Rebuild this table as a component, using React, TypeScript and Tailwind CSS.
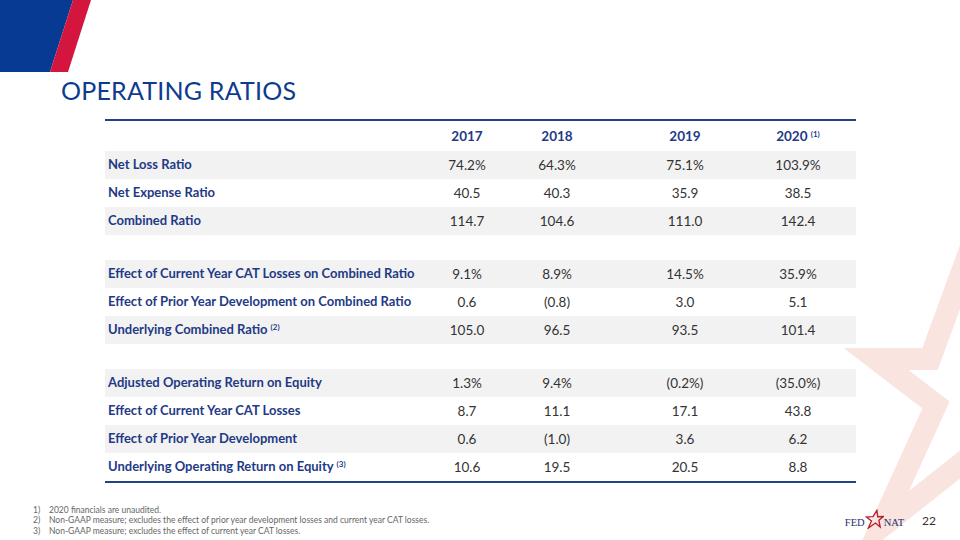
import React from 'react'

type Row = { label: string; sup?: string; values: string[]; shaded: boolean }

const groups: Row[][] = [
  [
    { label: 'Net Loss Ratio', values: ['74.2%', '64.3%', '75.1%', '103.9%'], shaded: true },
    { label: 'Net Expense Ratio', values: ['40.5', '40.3', '35.9', '38.5'], shaded: false },
    { label: 'Combined Ratio', values: ['114.7', '104.6', '111.0', '142.4'], shaded: true },
  ],
  [
    { label: 'Effect of Current Year CAT Losses on Combined Ratio', values: ['9.1%', '8.9%', '14.5%', '35.9%'], shaded: true },
    { label: 'Effect of Prior Year Development on Combined Ratio', values: ['0.6', '(0.8)', '3.0', '5.1'], shaded: false },
    { label: 'Underlying Combined Ratio', sup: '(2)', values: ['105.0', '96.5', '93.5', '101.4'], shaded: true },
  ],
  [
    { label: 'Adjusted Operating Return on Equity', values: ['1.3%', '9.4%', '(0.2%)', '(35.0%)'], shaded: true },
    { label: 'Effect of Current Year CAT Losses', values: ['8.7', '11.1', '17.1', '43.8'], shaded: false },
    { label: 'Effect of Prior Year Development', values: ['0.6', '(1.0)', '3.6', '6.2'], shaded: true },
    { label: 'Underlying Operating Return on Equity', sup: '(3)', values: ['10.6', '19.5', '20.5', '8.8'], shaded: false },
  ],
]

const footnotes = [
  '2020 financials are unaudited.',
  'Non-GAAP measure; excludes the effect of prior year development losses and current year CAT losses.',
  'Non-GAAP measure; excludes the effect of current year CAT losses.',
]

const cols = 'grid grid-cols-[317px_90px_90px_166px_60px_1fr] items-center'

// big faded star behind the table, mostly off the right edge
function StarWatermark() {
  return (
    <svg className="absolute inset-0" width={960} height={540} viewBox="0 0 960 540">
      <polygon
        points="1032,80 930,359 876,359 936,405 880,528 972,455 1090,600 1060,420 1200,340 1070,340"
        fill="none"
        stroke="#fae4e0"
        strokeWidth={22}
        strokeLinejoin="miter"
        strokeMiterlimit={10}
      />
    </svg>
  )
}

function CornerMark() {
  return (
    <svg width={92} height={72} viewBox="0 0 92 72" className="block shrink-0">
      <polygon points="0,0 73,0 50,72 0,72" fill="#063a93" />
      <polygon points="73,0 91,0 68,72 50,72" fill="#d4163f" />
    </svg>
  )
}

function FedNatLogo() {
  return (
    <div className="flex items-end font-['Liberation_Serif',serif] text-[10.5px] leading-none text-[#1e2f6d]">
      <span className="pb-[1px]">FED</span>
      <svg width={19} height={20} viewBox="0 0 20 20">
        <polygon
          points="12.5,1 13.4,7.6 19.5,7.4 14.6,11.3 16,18.5 11,14.2 3.5,19.5 6.8,12 1.5,8 8.4,7.6"
          fill="none"
          stroke="#b81f2d"
          strokeWidth={1.4}
          strokeLinejoin="miter"
        />
      </svg>
      <span className="pb-[1px]">NAT</span>
    </div>
  )
}

export default function App() {
  return (
    <div className="relative w-[960px] h-[540px] overflow-hidden bg-white font-['Lato',sans-serif]">
      <StarWatermark />
      <div className="relative flex flex-col h-full">
        <CornerMark />
        <h1 className="ml-[61px] mt-[6px] text-[25px] leading-none text-[#0e3b8d] tracking-[0.2px]">
          OPERATING RATIOS
        </h1>

        <div className="ml-[105px] mt-[16px] w-[751px] border-t-2 border-b-2 border-[#22408c]">
          <div className={`${cols} h-[30px] text-[13.5px] font-bold text-[#1f3a86]`}>
            <div />
            <div className="text-center">2017</div>
            <div className="text-center">2018</div>
            <div className="text-center">2019</div>
            <div className="text-center whitespace-nowrap">
              2020 <sup className="text-[8px]">(1)</sup>
            </div>
            <div />
          </div>
          {groups.map((group, gi) => (
            <div key={gi} className={gi > 0 ? 'pt-[25px]' : ''}>
              {group.map((row) => (
                <div
                  key={row.label}
                  className={`${cols} h-[28px] ${row.shaded ? 'bg-[#f2f2f2]' : 'bg-white'}`}
                >
                  <div className="pl-[3px] text-[13px] font-bold text-[#1f3a86] whitespace-nowrap">
                    {row.label}
                    {row.sup && <sup className="ml-[3px] text-[8px]">{row.sup}</sup>}
                  </div>
                  {row.values.map((v, i) => (
                    <div key={i} className="text-center text-[13.5px] text-[#333333] whitespace-nowrap">
                      {v}
                    </div>
                  ))}
                  <div />
                </div>
              ))}
            </div>
          ))}
        </div>

        <div className="mt-auto mb-[3px] flex items-end justify-between pr-[24px]">
          <ol className="ml-[33px] text-[8.5px] leading-[10.8px] text-[#666666]">
            {footnotes.map((f, i) => (
              <li key={i} className="flex">
                <span className="w-[16px]">{i + 1})</span>
                <span>{f}</span>
              </li>
            ))}
          </ol>
          <div className="flex items-end gap-[18px] pb-[8px]">
            <FedNatLogo />
            <span className="text-[12px] leading-none text-[#333333] pb-[2px]">22</span>
          </div>
        </div>
      </div>
    </div>
  )
}
